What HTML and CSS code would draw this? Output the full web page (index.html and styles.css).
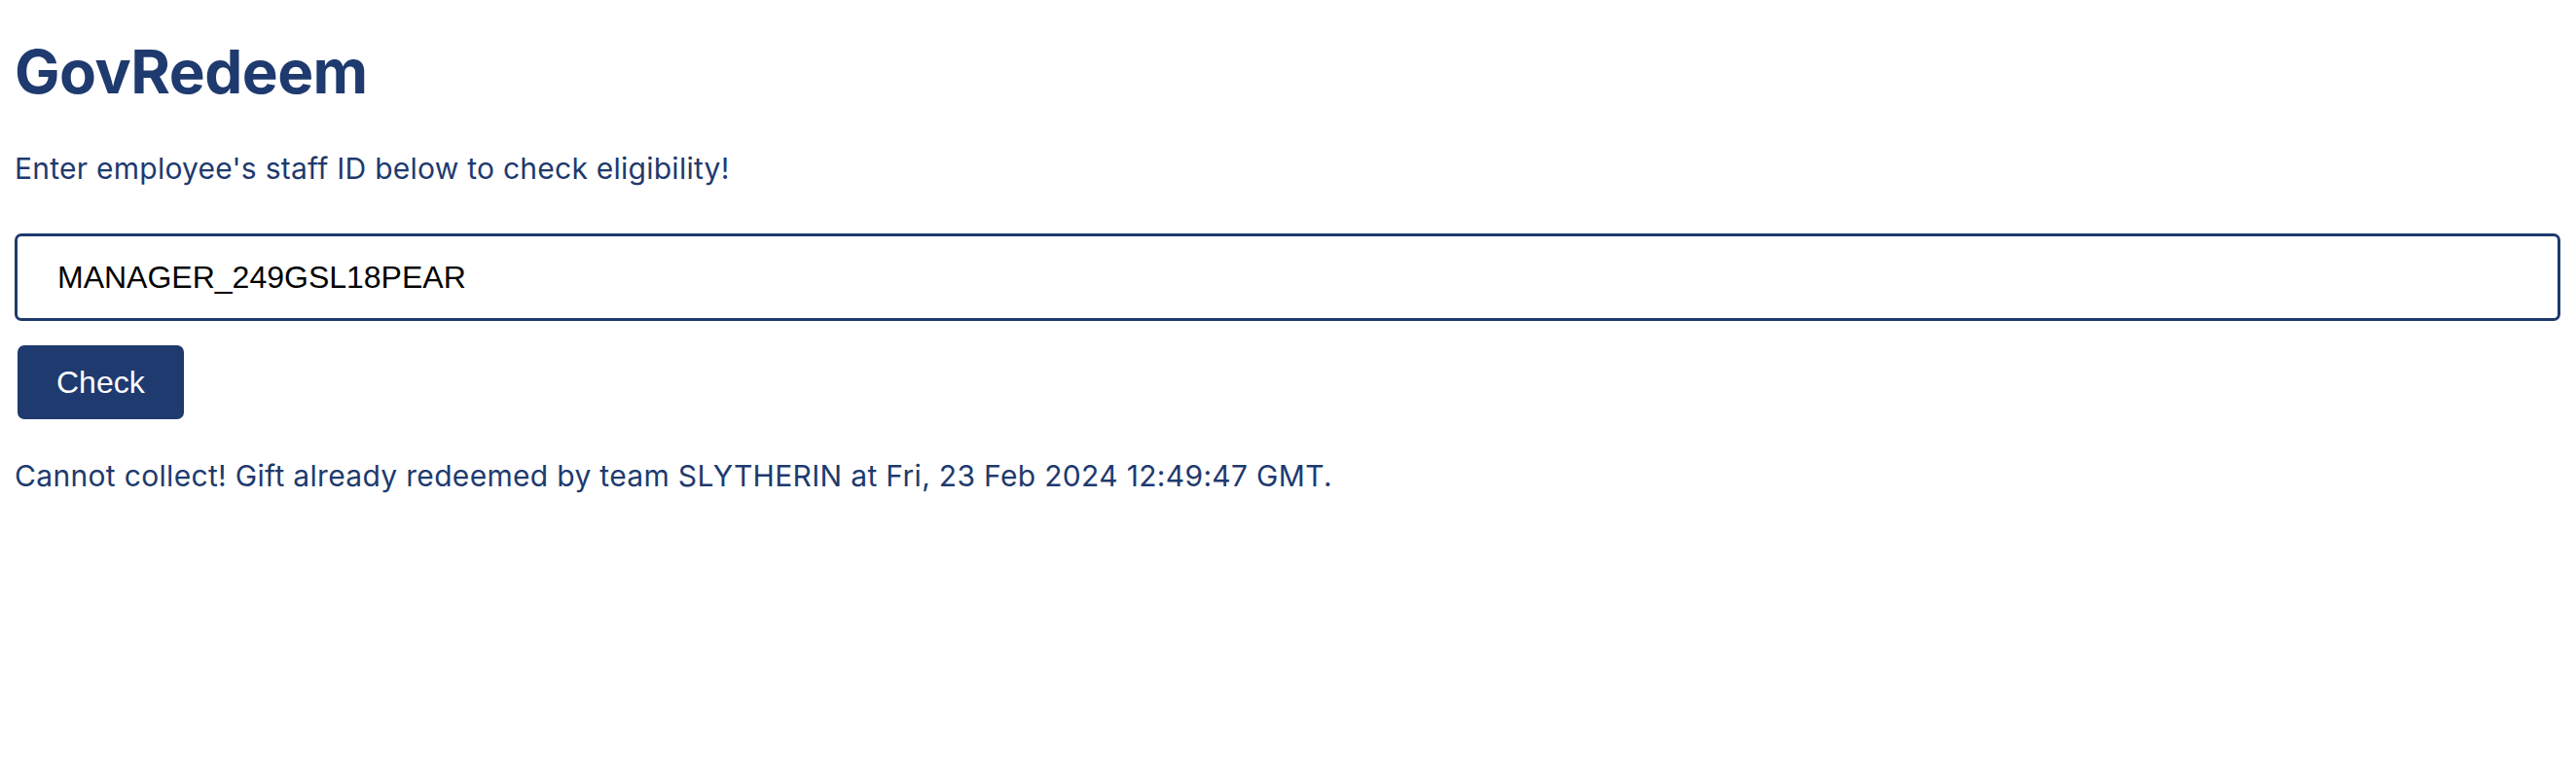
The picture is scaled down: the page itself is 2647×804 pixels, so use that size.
FILE: index.html
```html
<!DOCTYPE html>
<html lang="en">
<head>
<meta charset="utf-8">
<title>GovRedeem</title>
<link rel="stylesheet" href="styles.css">
</head>
<body>
<main class="page">
  <h1 class="title">GovRedeem</h1>
  <p class="subtitle">Enter employee's staff ID below to check eligibility!</p>
  <input class="staff-input" type="text" value="MANAGER_249GSL18PEAR">
  <button class="check-btn" type="button">Check</button>
  <p class="result">Cannot collect! Gift already redeemed by team SLYTHERIN at Fri, 23 Feb 2024 12:49:47 GMT.</p>
</main>
</body>
</html>
```

FILE: styles.css
```css
* { box-sizing: border-box; }

html, body {
  margin: 0;
  padding: 0;
  background: #ffffff;
}

.page {
  display: flex;
  flex-direction: column;
  align-items: flex-start;
  padding: 37px 16px 0 15px;
  font-family: Inter, "Liberation Sans", sans-serif;
  color: #1e3a6e;
}

.title {
  margin: 0;
  font-size: 62px;
  line-height: 74px;
  font-weight: 700;
  letter-spacing: -0.5px;
}

.subtitle {
  margin: 44px 0 0 0;
  font-size: 30px;
  line-height: 36px;
  letter-spacing: 0.25px;
}

.staff-input {
  margin: 49px 0 0 0;
  width: 100%;
  height: 90px;
  padding: 0 41px;
  border: 3px solid #1e3a6e;
  border-radius: 7px;
  font-family: "Liberation Sans", Arial, sans-serif;
  font-size: 32px;
  color: #000000;
  background: #ffffff;
  outline: none;
}

.check-btn {
  margin: 25px 0 0 3px;
  height: 76px;
  padding: 0 40px;
  border: none;
  border-radius: 7px;
  background: #1e3a6e;
  color: #ffffff;
  font-family: "Liberation Sans", Arial, sans-serif;
  font-size: 32px;
}

.result {
  margin: 40px 0 0 0;
  font-size: 30px;
  line-height: 36px;
  letter-spacing: 0.32px;
}
```
